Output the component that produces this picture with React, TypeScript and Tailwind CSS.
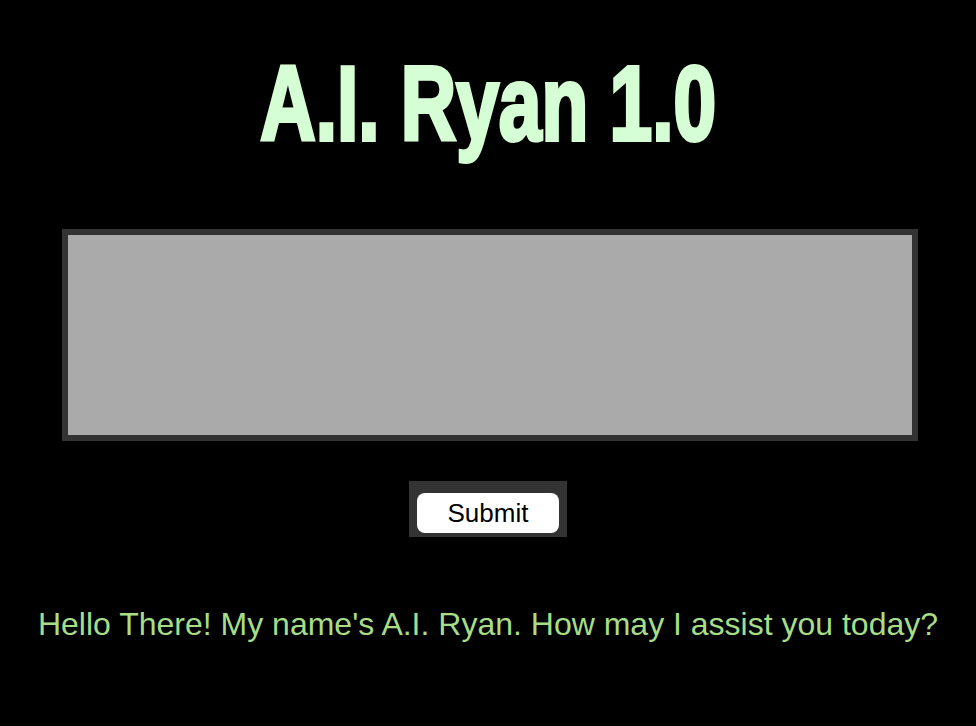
export default function App() {
  return (
    <div className="min-h-screen bg-black flex flex-col items-center font-['Liberation_Sans',Arial,sans-serif]">
      <h1 className="pt-[51px] text-[105px] leading-none font-bold text-[#d6fed4] scale-x-[0.73] [-webkit-text-stroke:4px_#d6fed4] whitespace-nowrap">
        A.I. Ryan 1.0
      </h1>

      <textarea
        aria-label="Message"
        className="mt-[73px] ml-1 w-[856px] h-[212px] border-[6px] border-[#333333] bg-[#aaaaaa] resize-none outline-none"
      />

      <div className="mt-10 bg-[#333333] px-2 pt-3 pb-1">
        <button className="w-[142px] h-10 rounded-lg bg-white text-black text-[26px] leading-none">
          Submit
        </button>
      </div>

      <p className="mt-[71px] text-[32px] leading-none text-[#a6dd86] whitespace-nowrap">
        Hello There! My name's A.I. Ryan. How may I assist you today?
      </p>
    </div>
  )
}
